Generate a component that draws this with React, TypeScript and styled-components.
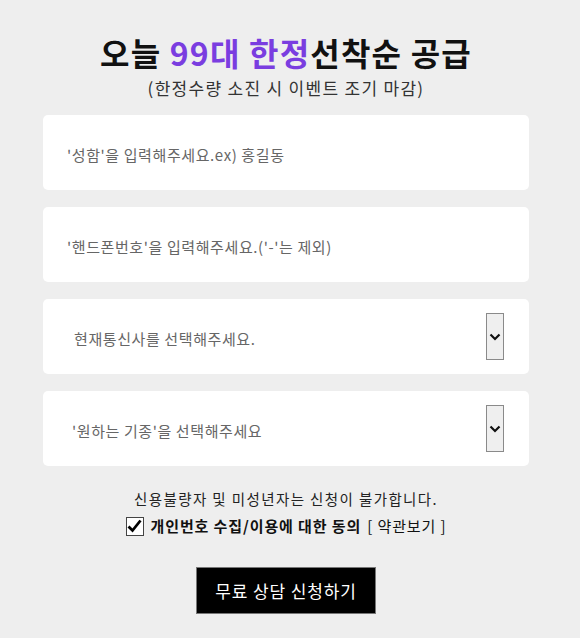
import React, { useState } from 'react';
import styled, { createGlobalStyle } from 'styled-components';

const GlobalStyle = createGlobalStyle`
  html, body {
    margin: 0;
    padding: 0;
    background: #eeeeee;
  }
  body {
    font-family: "Noto Sans CJK KR", "Noto Sans", sans-serif;
  }
  * {
    box-sizing: border-box;
  }
`;

const Page = styled.div`
  width: 580px;
  min-height: 638px;
  background: #eeeeee;
  padding: 32px 0 0 43px;
`;

const Column = styled.form`
  width: 486px;
  display: flex;
  flex-direction: column;
  align-items: stretch;
`;

const Title = styled.h1`
  margin: 0;
  font-size: 32px;
  line-height: 40px;
  font-weight: 700;
  color: #111;
  text-align: center;
  letter-spacing: 1.2px;
`;

const Accent = styled.span`
  color: #7a3de0;
`;

const SubTitle = styled.p`
  margin: 4px 0 15px;
  font-size: 17px;
  line-height: 24px;
  color: #333;
  text-align: center;
  letter-spacing: 1.3px;
`;

const FieldList = styled.div`
  display: flex;
  flex-direction: column;
  gap: 17px;
`;

const Field = styled.label<{ $indent: number }>`
  height: 75px;
  background: #fff;
  border-radius: 5px;
  display: flex;
  align-items: center;
  padding: 4px 25px 0 ${(p) => p.$indent}px;
`;

const TextInput = styled.input`
  flex: 1;
  border: none;
  outline: none;
  background: transparent;
  font-family: inherit;
  font-size: 15px;
  letter-spacing: 0.6px;
  color: #333;
  padding: 0;
  &::placeholder {
    color: #666;
  }
`;

const Select = styled.select`
  flex: 1;
  appearance: none;
  border: none;
  outline: none;
  background: transparent;
  font-family: inherit;
  font-size: 15px;
  letter-spacing: 0.6px;
  color: #666;
  padding: 0;
`;

const ArrowBox = styled.span`
  width: 18px;
  height: 47px;
  margin-top: -4px;
  border: 1px solid #8a8a8a;
  background: #efefef;
  display: flex;
  align-items: center;
  justify-content: center;
  pointer-events: none;
`;

const Notice = styled.p`
  margin: 23px 0 0;
  font-size: 14.5px;
  line-height: 20px;
  letter-spacing: 1.4px;
  color: #222;
  text-align: center;
`;

const AgreeRow = styled.div`
  margin-top: 7px;
  display: flex;
  align-items: center;
  justify-content: center;
  gap: 7px;
  font-size: 15px;
  line-height: 20px;
  letter-spacing: 0.9px;
  color: #111;
`;

const CheckBox = styled.span`
  width: 18px;
  height: 19px;
  border: 1px solid #444;
  background: #fff;
  display: flex;
  align-items: center;
  justify-content: center;
  cursor: pointer;
`;

const AgreeText = styled.span`
  font-weight: 700;
`;

const TermsLink = styled.span`
  margin-left: -1px;
  cursor: pointer;
`;

const SubmitButton = styled.button`
  align-self: center;
  margin-top: 31px;
  width: 180px;
  height: 47px;
  border: 1px solid #777;
  background: #000;
  color: #fff;
  font-family: inherit;
  font-size: 17px;
  letter-spacing: 0.9px;
  cursor: pointer;
`;

const Chevron = () => (
  <svg width="12" height="8" viewBox="0 0 12 8">
    <path d="M1.5 1.5 L6 6 L10.5 1.5" fill="none" stroke="#111" strokeWidth="2.2" />
  </svg>
);

export default function App() {
  const [agree, setAgree] = useState(true);

  return (
    <Page>
      <GlobalStyle />
      <Column onSubmit={(e) => e.preventDefault()}>
        <Title>
          오늘 <Accent>99대 한정</Accent>선착순 공급
        </Title>
        <SubTitle>(한정수량 소진 시 이벤트 조기 마감)</SubTitle>
        <FieldList>
          <Field $indent={24}>
            <TextInput placeholder="'성함'을 입력해주세요.ex) 홍길동" />
          </Field>
          <Field $indent={24}>
            <TextInput placeholder="'핸드폰번호'을 입력해주세요.('-'는 제외)" />
          </Field>
          <Field $indent={31}>
            <Select defaultValue="">
              <option value="">현재통신사를 선택해주세요.</option>
              <option>SKT</option>
              <option>KT</option>
              <option>LG U+</option>
            </Select>
            <ArrowBox>
              <Chevron />
            </ArrowBox>
          </Field>
          <Field $indent={29}>
            <Select defaultValue="">
              <option value="">'원하는 기종'을 선택해주세요</option>
            </Select>
            <ArrowBox>
              <Chevron />
            </ArrowBox>
          </Field>
        </FieldList>
        <Notice>신용불량자 및 미성년자는 신청이 불가합니다.</Notice>
        <AgreeRow>
          <CheckBox onClick={() => setAgree((v) => !v)}>
            {agree && (
              <svg width="15" height="14" viewBox="0 0 15 14">
                <path d="M1.5 7.5 L5.5 11.5 L13.5 1.5" fill="none" stroke="#000" strokeWidth="2.8" />
              </svg>
            )}
          </CheckBox>
          <AgreeText>개인번호 수집/이용에 대한 동의</AgreeText>
          <TermsLink>[ 약관보기 ]</TermsLink>
        </AgreeRow>
        <SubmitButton type="submit">무료 상담 신청하기</SubmitButton>
      </Column>
    </Page>
  );
}
